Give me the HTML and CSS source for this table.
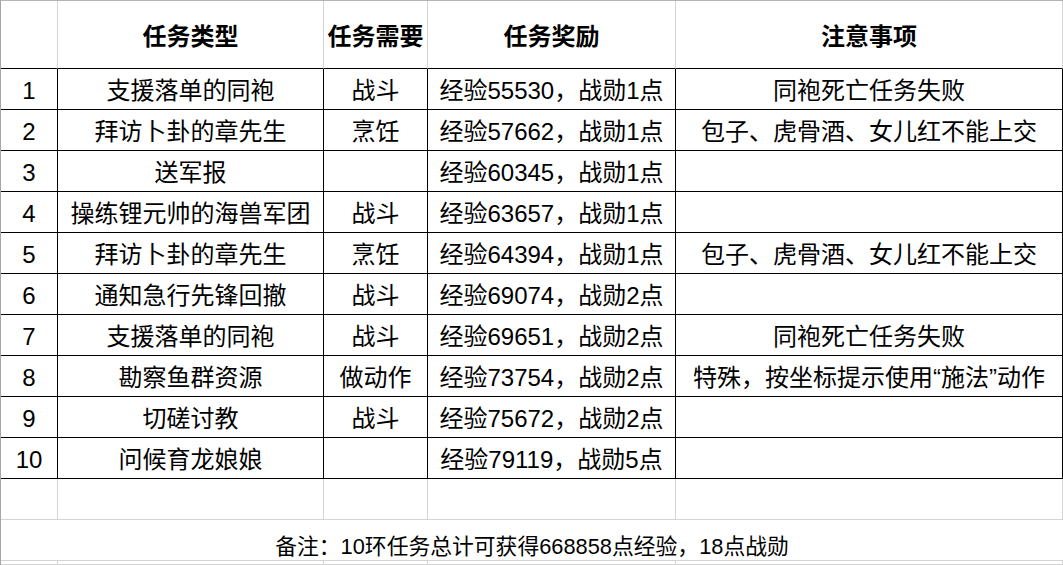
FILE: index.html
```html
<!DOCTYPE html>
<html lang="zh-CN">
<head>
<meta charset="utf-8">
<title>任务表</title>
<link rel="stylesheet" href="styles.css">
</head>
<body>
<div class="sheet">
  <div class="c h"></div>
  <div class="c h">任务类型</div>
  <div class="c h">任务需要</div>
  <div class="c h">任务奖励</div>
  <div class="c h">注意事项</div>

  <div class="c d">1</div><div class="c d">支援落单的同袍</div><div class="c d">战斗</div><div class="c d">经验55530，战勋1点</div><div class="c d">同袍死亡任务失败</div>
  <div class="c d">2</div><div class="c d">拜访卜卦的章先生</div><div class="c d">烹饪</div><div class="c d">经验57662，战勋1点</div><div class="c d">包子、虎骨酒、女儿红不能上交</div>
  <div class="c d">3</div><div class="c d">送军报</div><div class="c d"></div><div class="c d">经验60345，战勋1点</div><div class="c d"></div>
  <div class="c d">4</div><div class="c d">操练锂元帅的海兽军团</div><div class="c d">战斗</div><div class="c d">经验63657，战勋1点</div><div class="c d"></div>
  <div class="c d">5</div><div class="c d">拜访卜卦的章先生</div><div class="c d">烹饪</div><div class="c d">经验64394，战勋1点</div><div class="c d">包子、虎骨酒、女儿红不能上交</div>
  <div class="c d">6</div><div class="c d">通知急行先锋回撤</div><div class="c d">战斗</div><div class="c d">经验69074，战勋2点</div><div class="c d"></div>
  <div class="c d">7</div><div class="c d">支援落单的同袍</div><div class="c d">战斗</div><div class="c d">经验69651，战勋2点</div><div class="c d">同袍死亡任务失败</div>
  <div class="c d">8</div><div class="c d">勘察鱼群资源</div><div class="c d">做动作</div><div class="c d">经验73754，战勋2点</div><div class="c d">特殊，按坐标提示使用“施法”动作</div>
  <div class="c d">9</div><div class="c d">切磋讨教</div><div class="c d">战斗</div><div class="c d">经验75672，战勋2点</div><div class="c d"></div>
  <div class="c d">10</div><div class="c d">问候育龙娘娘</div><div class="c d"></div><div class="c d">经验79119，战勋5点</div><div class="c d"></div>

  <div class="c e"></div><div class="c e"></div><div class="c e"></div><div class="c e"></div><div class="c e"></div>

  <div class="c note">备注：10环任务总计可获得668858点经验，18点战勋</div>

  <div class="c e"></div><div class="c e"></div><div class="c e"></div><div class="c e"></div><div class="c e"></div>
</div>
</body>
</html>
```

FILE: styles.css
```css
html, body {
  margin: 0;
  padding: 0;
  background: #ffffff;
}

body {
  width: 1063px;
  height: 565px;
  overflow: hidden;
  font-family: "Liberation Sans", "Noto Sans CJK SC", sans-serif;
  color: #000000;
}

.sheet {
  display: grid;
  grid-template-columns: 57px 266px 104px 248px 387px;
  grid-template-rows: 68px repeat(12, 41px) 4px;
  border-left: 1px solid #a6a6a6;
  border-top: 1px solid #b4b4b4;
  width: 1062px;
}

.c {
  box-sizing: border-box;
  display: flex;
  align-items: center;
  justify-content: center;
  white-space: nowrap;
  font-size: 24px;
  line-height: 28px;
}

.h {
  font-weight: bold;
  border-right: 1px solid #d4d4d4;
  border-bottom: 1px solid #000000;
  padding-top: 5px;
}

.d {
  border-right: 1px solid #000000;
  border-bottom: 1px solid #000000;
  padding-top: 3px;
}

.e {
  border-right: 1px solid #d4d4d4;
  border-bottom: 1px solid #d4d4d4;
}

.note {
  grid-column: 1 / -1;
  align-items: flex-end;
  font-size: 21.8px;
  line-height: 24px;
  padding-bottom: 1px;
  border-bottom: 1px solid #d4d4d4;
}
```
